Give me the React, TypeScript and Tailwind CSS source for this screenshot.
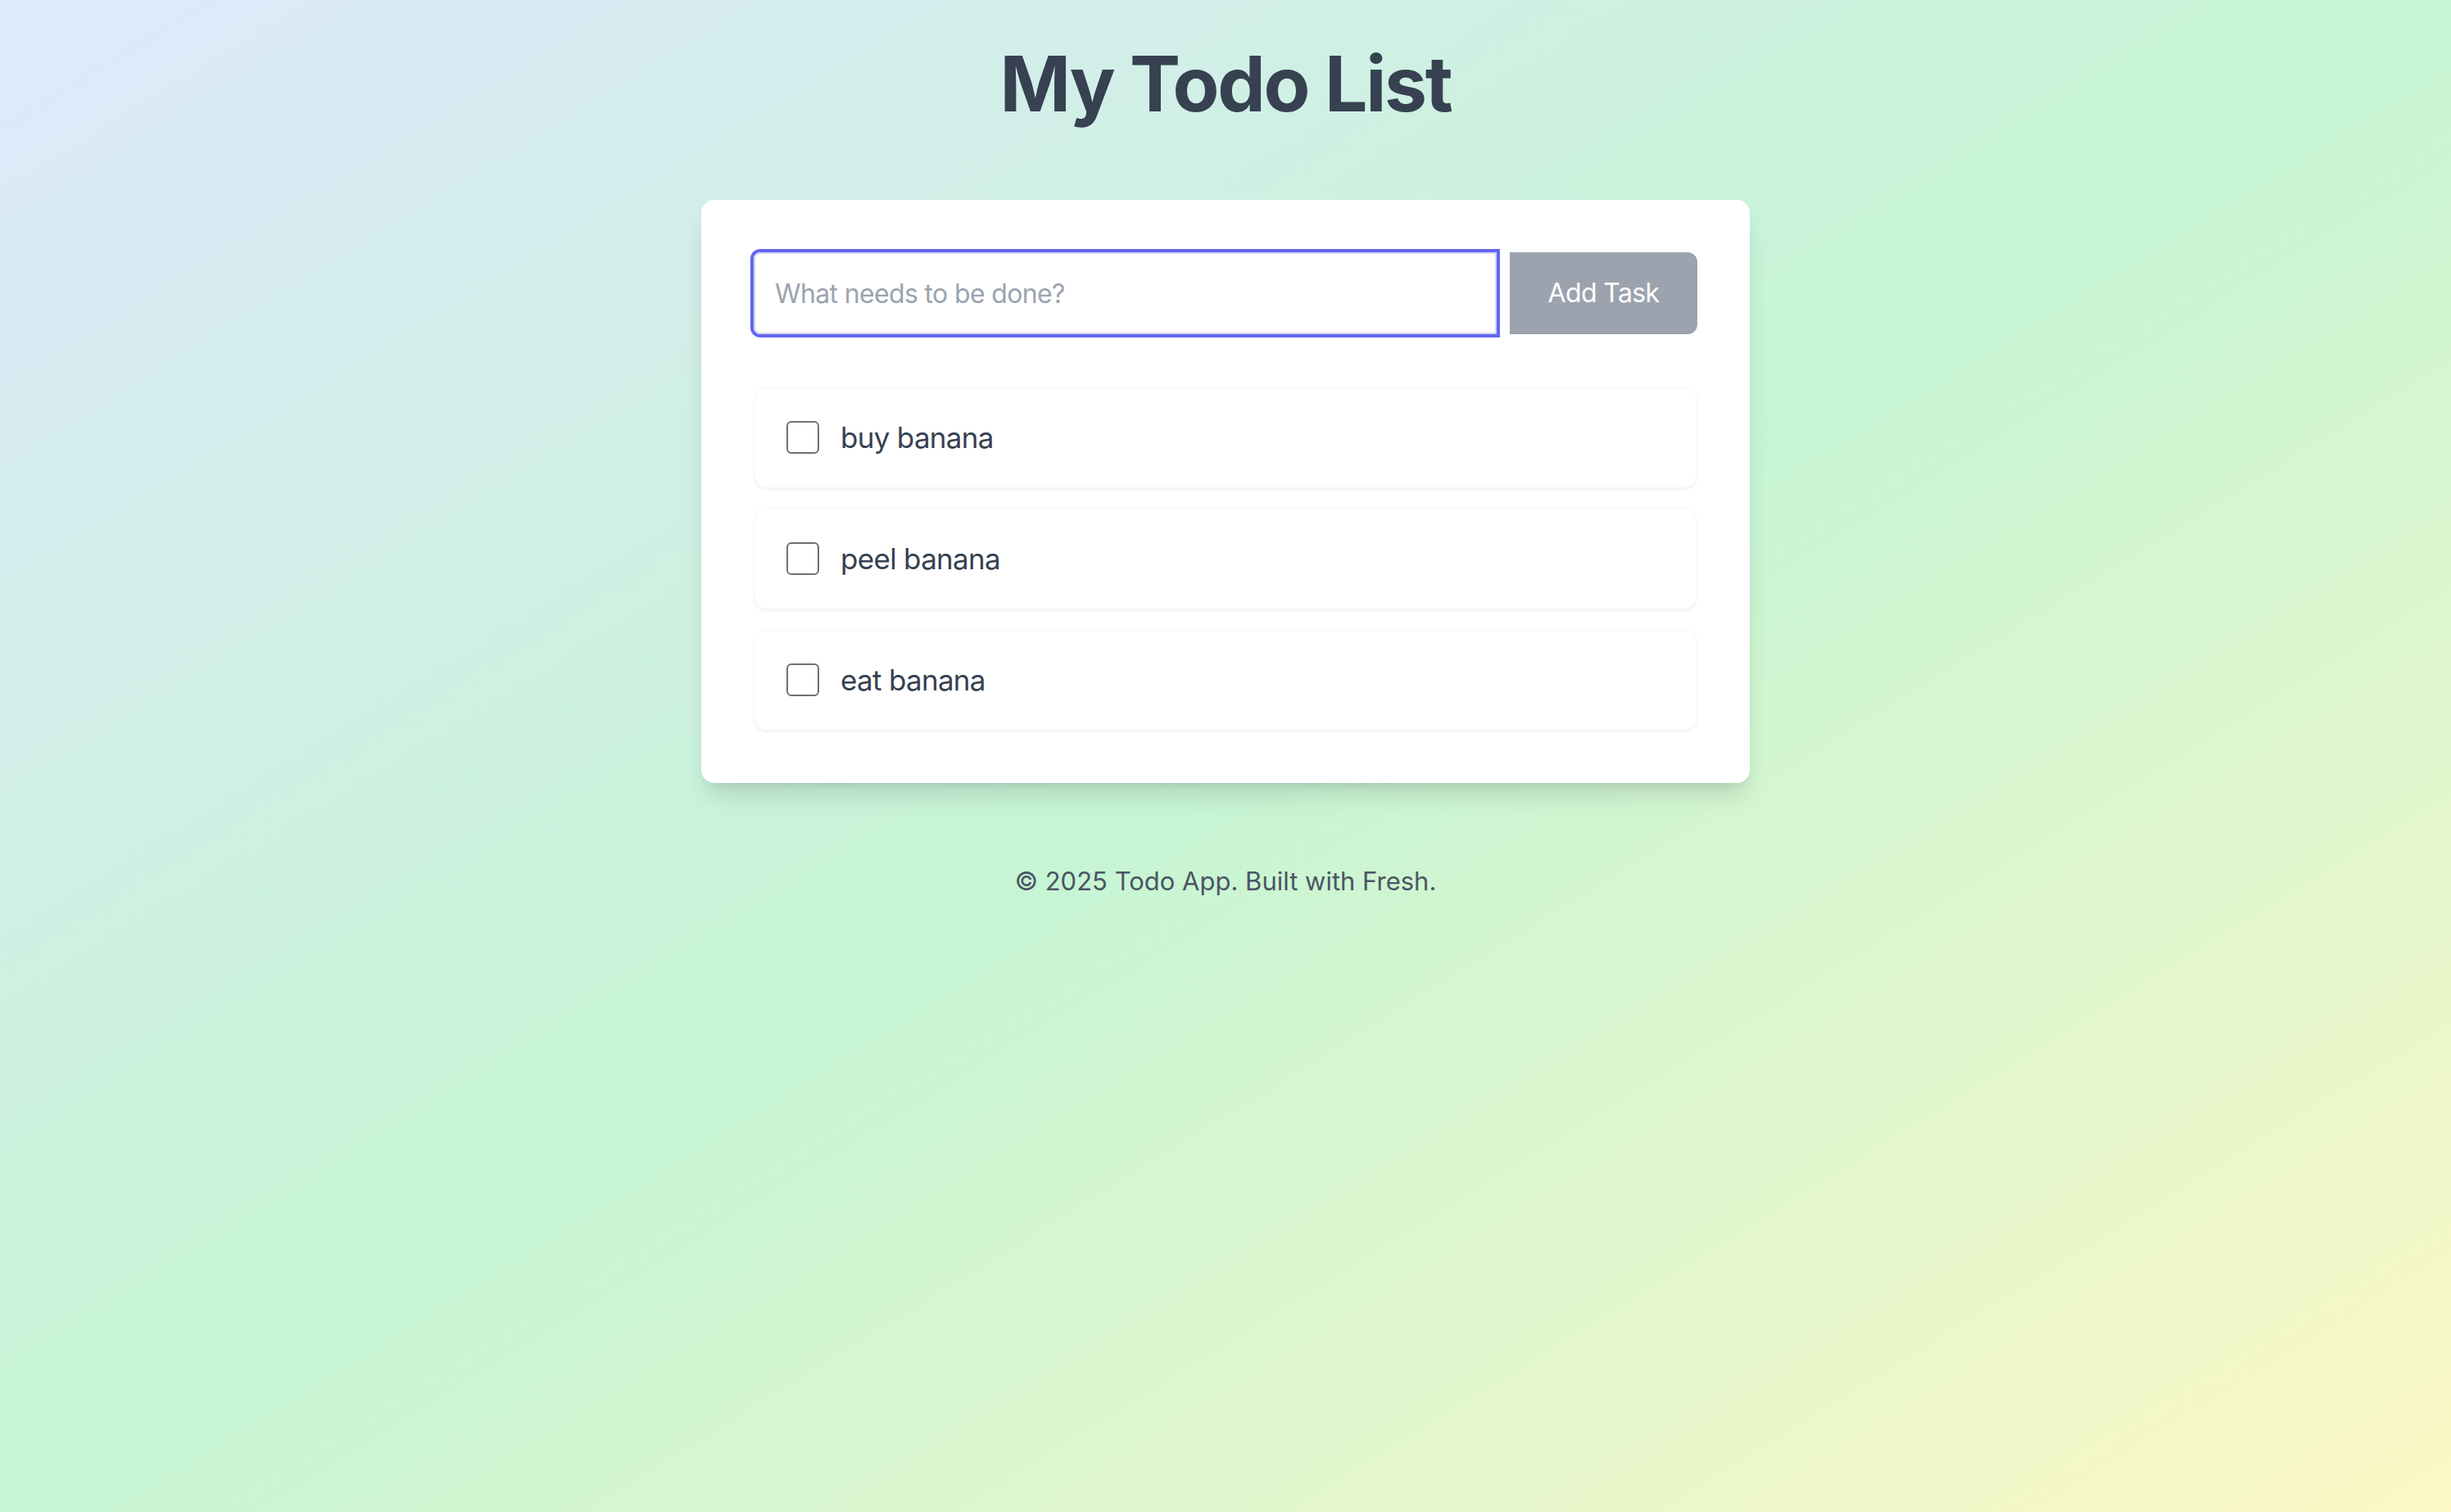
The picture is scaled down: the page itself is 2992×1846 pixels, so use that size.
import { useState } from 'react'

const initialTodos = [
  { id: 1, text: 'buy banana', done: false },
  { id: 2, text: 'peel banana', done: false },
  { id: 3, text: 'eat banana', done: false },
]

export default function App() {
  const [todos, setTodos] = useState(initialTodos)
  const [draft, setDraft] = useState('')

  const addTodo = () => {
    if (!draft.trim()) return
    setTodos([...todos, { id: Date.now(), text: draft.trim(), done: false }])
    setDraft('')
  }

  const toggle = (id: number) => {
    setTodos(todos.map((t) => (t.id === id ? { ...t, done: !t.done } : t)))
  }

  return (
    <div className="min-h-screen bg-linear-to-br/srgb from-[#dde9fc] via-[#c6f5d4] to-[#fdf8c6] font-['Inter',sans-serif]">
      <div className="mx-auto w-[1280px] pt-[54px]">
        <h1 className="text-center text-[93px] leading-[96px] font-bold tracking-[-0.025em] text-[#374151]">
          My Todo List
        </h1>

        <div className="mt-[94px] rounded-[16px] bg-white p-[64px] shadow-[0_20px_30px_-6px_rgba(0,0,0,0.13),0_8px_12px_-8px_rgba(0,0,0,0.1)]">
          <div className="mb-[64px] flex gap-[16px]">
            <input
              type="text"
              value={draft}
              onChange={(e) => setDraft(e.target.value)}
              placeholder="What needs to be done?"
              className="h-[100px] flex-1 rounded-l-[8px] border-2 border-[#d4d5f3] px-[24px] text-[32px] tracking-[-0.02em] text-[#374151] placeholder:text-[#9ca3af] outline-none ring-4 ring-[#6366f1]"
            />
            <button
              onClick={addTodo}
              className="h-[100px] w-[229px] rounded-r-[12px] bg-[#9ca3af] text-[32px] tracking-[-0.02em] text-white"
            >
              Add Task
            </button>
          </div>

          <ul className="flex flex-col gap-[24px]">
            {todos.map((todo) => (
              <li
                key={todo.id}
                className="flex h-[124px] items-center rounded-[16px] border-2 border-[#f9fafb] bg-white px-[38px] shadow-[0_2px_3px_rgba(0,0,0,0.05)]"
              >
                <input
                  type="checkbox"
                  checked={todo.done}
                  onChange={() => toggle(todo.id)}
                  className="h-[40px] w-[40px] appearance-none rounded-[6px] border-2 border-[#707070] bg-white"
                />
                <span className="ml-[26px] text-[35px] tracking-[-0.02em] text-[#374151]">{todo.text}</span>
              </li>
            ))}
          </ul>
        </div>

        <footer className="mt-[97px] text-center text-[31px] leading-[45px] text-[#4b5563]">
          © 2025 Todo App. Built with Fresh.
        </footer>
      </div>
    </div>
  )
}
